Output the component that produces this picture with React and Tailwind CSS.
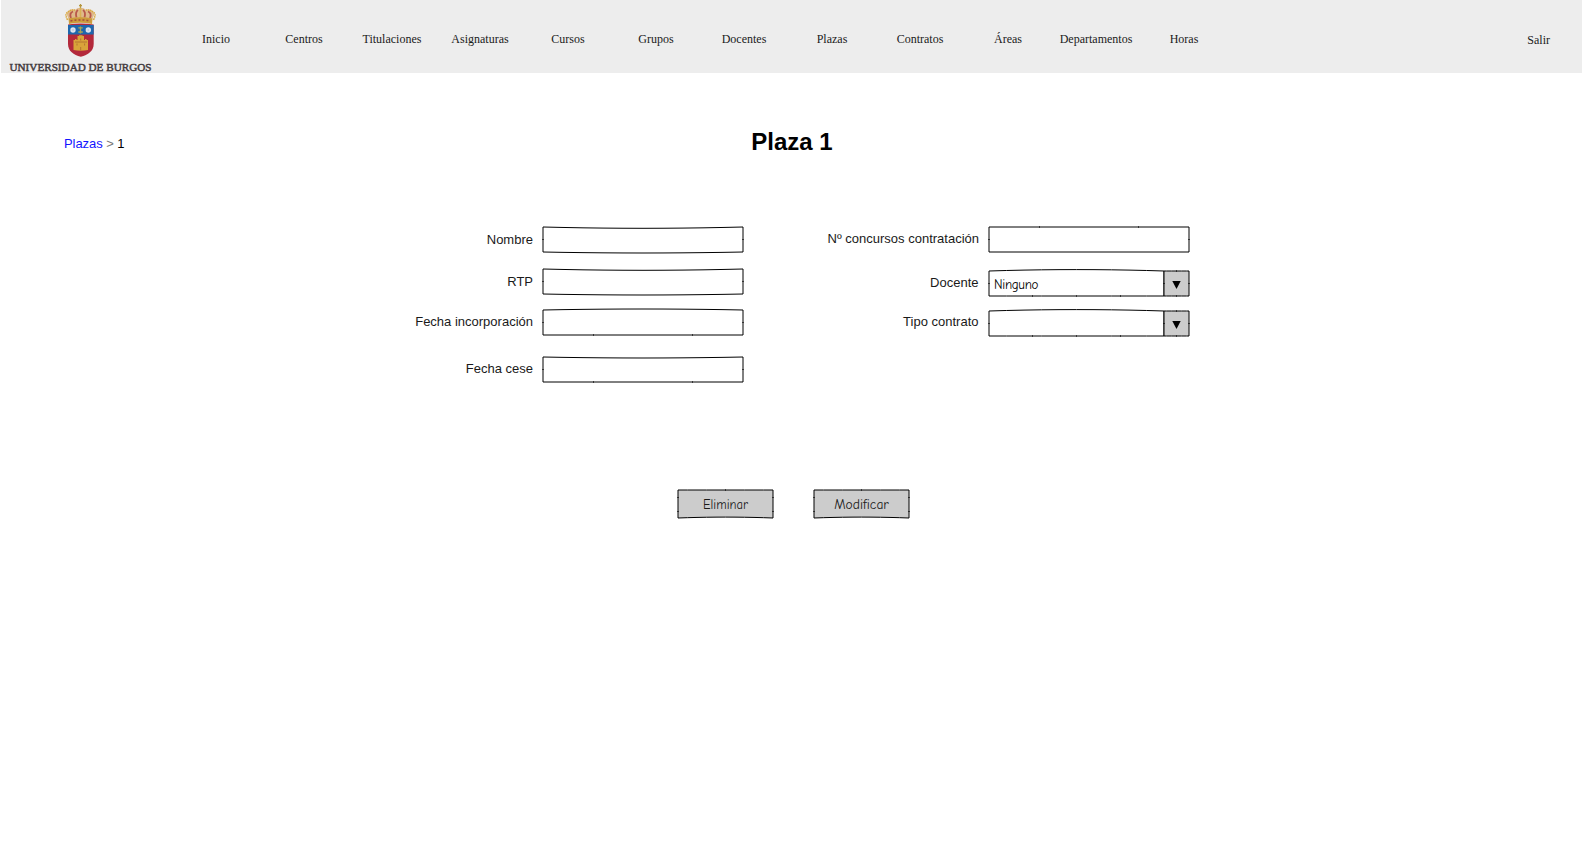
const NAV = [
  'Inicio', 'Centros', 'Titulaciones', 'Asignaturas', 'Cursos', 'Grupos',
  'Docentes', 'Plazas', 'Contratos', 'Áreas', 'Departamentos', 'Horas',
];

function Crest() {
  return (
    <svg width="152" height="73" viewBox="0 0 152 73" className="block" role="img" aria-label="Universidad de Burgos">
      <path d="M80.5 4 V8 M79 5.7 H82" stroke="#b5963e" strokeWidth="1.3" />
      <path d="M69.5 21 L67 15 C67 9.5 72 9 75 10 C78 7 83 7 86 10 C89 9 94 9.5 94 15 L91.5 21 Z" fill="#dfb98a" />
      <path d="M71 18 Q69 13 73 11.5 M76.5 17.5 Q75 12 78 10 M84.5 17.5 Q86 12 83 10 M90 18 Q92 13 88 11.5" stroke="#b8584a" strokeWidth="1.8" fill="none" />
      <path d="M80.5 8 V18" stroke="#d9b254" strokeWidth="1.6" />
      <path d="M67.5 20 Q64.5 14 67.5 12.5 Q70 9.5 75 10 M93.5 20 Q96.5 14 93.5 12.5 Q91 9.5 86 10" stroke="#d8a83e" strokeWidth="1.5" strokeDasharray="1.5 0.7" fill="none" />
      <path d="M68.5 18.5 Q80.5 16 92.5 18.5 L92 24 Q80.5 21.5 69 24 Z" fill="#cc9c3b" />
      <path d="M70.5 21 Q80.5 18.8 90.5 21" stroke="#a84a3d" strokeWidth="1.5" strokeDasharray="2 2" fill="none" />
      <path d="M68 24.5 Q80.5 22.5 93.7 24.5 V44 C93.7 51 88 55 80.8 56.8 C73.5 55 68 51 68 44 Z" fill="#b3293b" />
      <path d="M68 25 H93.7 V34.5 H68 Z" fill="#1e67ad" />
      <circle cx="73" cy="30" r="2.7" fill="#dce3ef" />
      <circle cx="88.3" cy="30" r="2.7" fill="#dce3ef" />
      <circle cx="73" cy="30" r="0.8" fill="#b3bfd4" />
      <circle cx="88.3" cy="30" r="0.8" fill="#b3bfd4" />
      <path d="M80.5 26.5 V33.5 M78.3 27.8 H82.8 M78.3 32 H82.8" stroke="#a9a354" strokeWidth="1.3" />
      <path d="M73.5 50 V40 H75 V39 H76.5 V40 H77.5 V36 H79 V35.3 H82.5 V36 H84 V40 H85 V39 H86.5 V40 H88 V50 Q80.7 51.5 73.5 50 Z" fill="#d9a43a" />
      <path d="M80.7 50.5 V47 M77 43.5 V45.5 M84.6 43.5 V45.5 M80.7 38.5 V40.5 M75 42 H87" stroke="#b06f2f" strokeWidth="0.9" fill="none" />
      <text x="9.5" y="71" textLength="142" lengthAdjust="spacingAndGlyphs" fill="#443c40" stroke="#443c40" strokeWidth="0.45" className="font-['Liberation_Serif',serif] text-[10.6px]">
        UNIVERSIDAD DE BURGOS
      </text>
    </svg>
  );
}

const STEPS = [0, 0.1, 0.2, 0.3, 0.4, 0.5, 0.6, 0.7, 0.8, 0.9, 1];

/* Hand-drawn rectangle. `top` and `bottom` bow the horizontal edges (px);
   `ticks` are [x, y] marks where pen strokes overlap. */
function SketchBox({ w, h, fill = 'white', top = 0, bottom = 0, ticks = [], children }) {
  const upper = STEPS.map((t) => `${w * t},${4 * top * t * (1 - t)}`);
  const lower = STEPS.map((t) => `${w * (1 - t)},${h + 4 * bottom * t * (1 - t)}`);
  return (
    <svg width={w} height={h} className="block shrink-0 overflow-visible" aria-hidden="true">
      <polygon points={[...upper, ...lower].join(' ')} fill={fill} stroke="black" strokeLinejoin="round" />
      {ticks.map(([x, y], i) => {
        const onEdge = y === 0 || y === h;
        return (
          <rect
            key={i}
            x={x - (onEdge ? 0.5 : 1)}
            y={y - (onEdge ? 1 : 0.5)}
            width={onEdge ? 1 : 2}
            height={onEdge ? 2 : 1}
            opacity="0.6"
          />
        );
      })}
      {children}
    </svg>
  );
}

function TextField({ label, top = 0, bottom = 0, ticks = [], className = '', labelClass = '' }) {
  return (
    <div className={`flex h-[25px] items-start justify-end gap-[10px] ${className}`}>
      <label className={`text-[13px] leading-[15px] text-[#1a1a1a] ${labelClass}`}>{label}</label>
      <SketchBox w={200} h={25} top={top} bottom={bottom} ticks={[[0, 12.5], [200, 12.5], ...ticks]} />
    </div>
  );
}

function SelectField({ label, value, className = '', labelClass = '' }) {
  return (
    <div className={`flex h-[25px] items-start justify-end ${className}`}>
      <label className={`mr-[10.5px] text-[13px] leading-[15px] text-[#1a1a1a] ${labelClass}`}>{label}</label>
      <SketchBox w={175} h={25} top={-1.4} ticks={[[0, 12.5], [43.5, 25], [87.5, 25], [131.5, 25]]}>
        <text x="5" y="18" textLength={value ? 44.5 : undefined} className="font-['Comic_Sans_MS','Comic_Neue',Lato,sans-serif] text-[13px]">
          {value}
        </text>
      </SketchBox>
      <SketchBox w={25} h={25} fill="#cccccc" ticks={[[0, 12.5], [25, 12.5], [12.5, 0], [12.5, 25]]}>
        <path d="M8.3 10 H16.7 L12.5 18 Z" fill="black" />
      </SketchBox>
    </div>
  );
}

function SketchButton({ children, textWidth }) {
  return (
    <button type="button" className="block h-[28px] w-[95px]">
      <SketchBox w={95} h={28} fill="#cccccc" bottom={-0.9} ticks={[[47.5, 0], [0, 7.5], [0, 21.5], [95, 7.5], [95, 21.5]]}>
        <text x="47.5" y="19" textAnchor="middle" textLength={textWidth} lengthAdjust="spacingAndGlyphs" className="font-['Comic_Sans_MS','Comic_Neue',Lato,sans-serif] text-[13.5px]" fill="#1a1a1a">
          {children}
        </text>
      </SketchBox>
    </button>
  );
}

export default function App() {
  return (
    <div className="h-[858px] w-[1582px] overflow-hidden bg-white font-['Liberation_Sans',Arial,sans-serif] text-black">
      <header className="ml-px flex h-[73px] items-start bg-[#ededed] font-['Liberation_Serif',serif] text-[12px] leading-[14px] text-[#1a1a1a]">
        <div className="-ml-px w-[172px]"><Crest /></div>
        <nav className="grid grid-cols-[repeat(12,88px)] pt-[32px] text-center">
          {NAV.map((item) => <a key={item}>{item}</a>)}
        </nav>
        <a className="mr-[32px] ml-auto pt-[33px]">Salir</a>
      </header>

      <div className="grid grid-cols-[1fr_auto_1fr] items-start pt-[55px] pl-[2px]">
        <div className="pt-[8px] pl-[62px] text-[13px] leading-[15px] tracking-[-0.06px]">
          <a className="text-[#1414ff]">Plazas</a> <span className="text-[#777]">&gt;</span> <span>1</span>
        </div>
        <h1 className="text-[24px] leading-[28px] font-bold">Plaza 1</h1>
        <div />
      </div>

      <form className="flex pt-[71px]">
        <div className="w-[743px]">
          <TextField label="Nombre" top={1.3} bottom={1} labelClass="pt-[5px]" />
          <TextField label="RTP" top={1.3} bottom={1} className="mt-[17px]" labelClass="pt-[5px]" />
          <TextField label="Fecha incorporación" top={-1} ticks={[[50.5, 25], [149.5, 25]]} className="mt-[16px]" labelClass="pt-[4px]" />
          <TextField label="Fecha cese" top={1} ticks={[[50.5, 25], [149.5, 25]]} className="mt-[22px]" labelClass="pt-[4px]" />
        </div>
        <div className="w-[446px]">
          <TextField label="Nº concursos contratación" ticks={[[50.5, 0], [149.5, 0]]} labelClass="pt-[4px]" />
          <SelectField label="Docente" value="Ninguno" className="mt-[19px]" labelClass="pt-[4px]" />
          <SelectField label="Tipo contrato" value="" className="mt-[15px]" labelClass="pt-[3px]" />
        </div>
      </form>

      <div className="flex gap-[41px] pt-[108px] pl-[678px]">
        <SketchButton textWidth={45}>Eliminar</SketchButton>
        <SketchButton textWidth={54.5}>Modificar</SketchButton>
      </div>
    </div>
  );
}
